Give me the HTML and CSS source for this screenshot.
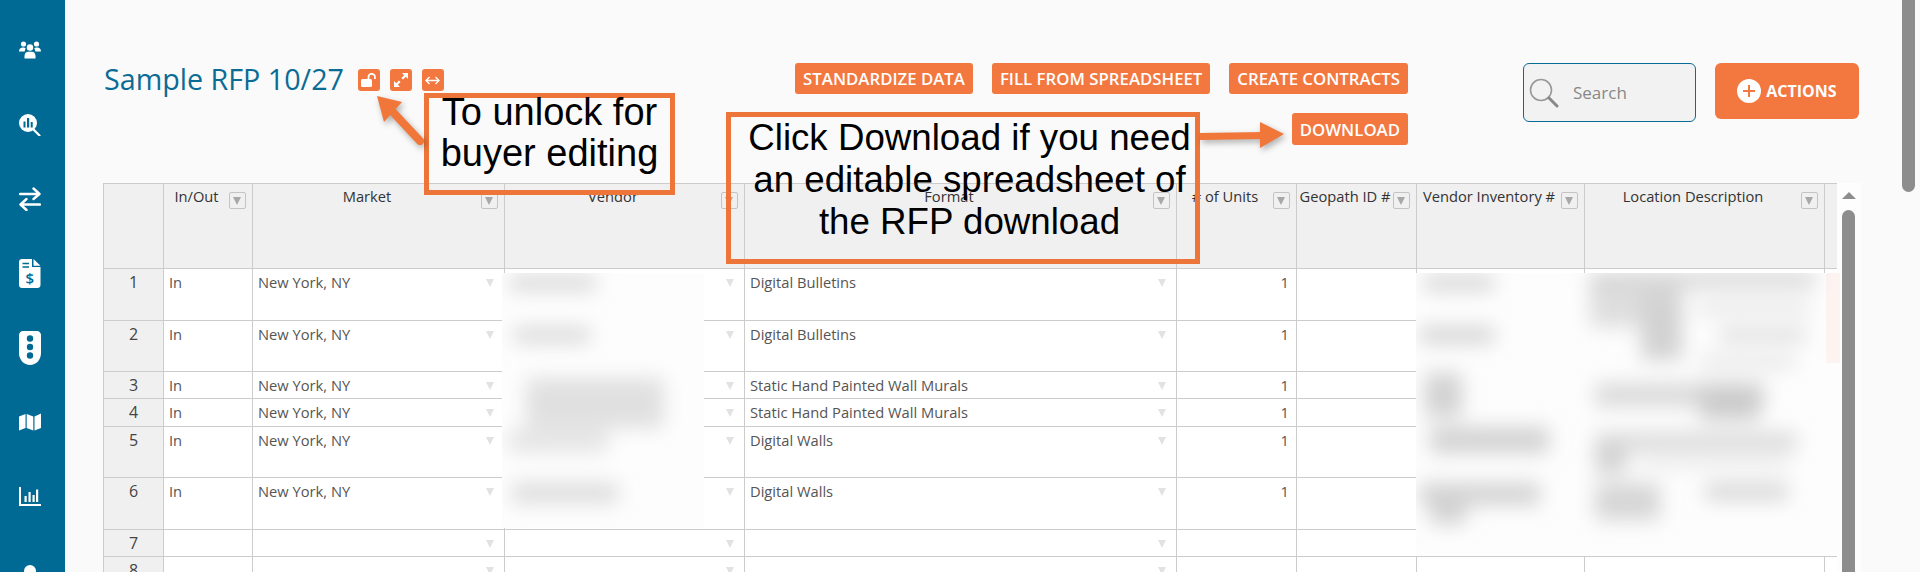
FILE: index.html
```html
<!DOCTYPE html>
<html lang="en">
<head>
    <meta charset="UTF-8">
    <meta name="viewport" content="width=device-width, initial-scale=1.0">
    <title>Sample RFP 10/27</title>
    <link rel="stylesheet" href="styles.css">
</head>
<body>
    <nav class="sidebar">
        <a class="nav-item">
            <svg width="22" height="18" viewBox="0 0 22 18" fill="#fff">
                <circle cx="4.5" cy="3" r="2.6"/><circle cx="17.5" cy="3" r="2.6"/><circle cx="11" cy="6.5" r="3.2"/>
                <path d="M0 10.5C0 8 1.5 6.6 4 6.6c1.2 0 2 .3 2.7 1-.7 1-1 2-1 3H0z"/>
                <path d="M22 10.5c0-2.500-1.500-3.900-4-3.900-1.200 0-2 .3-2.700 1 .7 1 1 2 1 3H22z"/>
                <path d="M5.500 17.500v-2.500c0-2.800 1.800-4.300 3.500-4.300h4c1.700 0 3.500 1.500 3.500 4.300v2.500z"/>
            </svg>
        </a>
        <a class="nav-item">
            <svg width="22" height="22" viewBox="0 0 22 22" fill="#fff">
                <circle cx="9" cy="9" r="9"/>
                <path d="M14.500 15.500l6 6" stroke="#fff" stroke-width="2.200" stroke-linecap="round"/>
                <path d="M4.500 7.500h2v6h-2zM8 4h2.200v9.500H8zM11.700 8h2v5.500h-2z" fill="#006a94"/>
            </svg>
        </a>
        <a class="nav-item">
            <svg width="22" height="24" viewBox="0 0 22 24" fill="none" stroke="#fff" stroke-width="2.400" stroke-linecap="round" stroke-linejoin="round">
                <path d="M1 7h19M14.500 1.500L20.500 7l-6 5"/>
                <path d="M21 17.500H2M7.500 12L1.500 17.500l6 5.500"/>
            </svg>
        </a>
        <a class="nav-item">
            <svg width="22" height="29" viewBox="0 0 22 29" fill="#fff">
                <path d="M3 0h10v8h8.500v18c0 1.700-1.300 3-3 3H3c-1.700 0-3-1.300-3-3V3c0-1.700 1.300-3 3-3z"/>
                <path d="M14.500 0l7 6.800h-7z"/>
                <path d="M3.500 4.500h6.500M3.500 8h6.500" stroke="#006a94" stroke-width="1.500"/>
                <text class="doc-dollar" x="10.800" y="24.500">$</text>
            </svg>
        </a>
        <a class="nav-item">
            <svg width="22" height="34" viewBox="0 0 22 34" fill="#fff">
                <path d="M4 0h14c2.200 0 4 1.800 4 4v18c0 7-5 12-11 12S0 29 0 22V4c0-2.200 1.800-4 4-4z"/>
                <circle cx="11" cy="7.500" r="3.200" fill="#006a94"/>
                <circle cx="11" cy="16" r="3.200" fill="#006a94"/>
                <circle cx="11" cy="24.500" r="3.200" fill="#006a94"/>
            </svg>
        </a>
        <a class="nav-item">
            <svg width="22" height="18" viewBox="0 0 22 18" fill="#fff">
                <path d="M0 3.500L6.500 1v14L0 17.500zM7.700 1l6.600 2.500v14L7.700 15zM15.500 3.500L22 .5V15l-6.500 2.500z"/>
            </svg>
        </a>
        <a class="nav-item">
            <svg width="22" height="20" viewBox="0 0 22 20" fill="#fff">
                <path d="M1 0v18h20.500" fill="none" stroke="#fff" stroke-width="2" stroke-linecap="round"/>
                <path d="M5.500 9h2.200v6H5.500zM9.500 5h2.200v10H9.500zM13.500 8h2.200v7h-2.200zM17 2.500h2.200V15H17z"/>
            </svg>
        </a>
        <a class="nav-item"><span class="nav-dot"></span></a>
    </nav>

    <main class="content">
        <header class="top-bar">
            <div class="title-group">
                <h1>Sample RFP 10/27</h1>
                <button class="icon-btn">
                    <svg width="16" height="14" viewBox="0 0 16 14" fill="#fff">
                        <rect x="0" y="6" width="11" height="8" rx="1.500"/>
                        <path d="M7.500 6.500V4a3.200 3.200 0 0 1 6.400 0v2" fill="none" stroke="#fff" stroke-width="1.800"/>
                    </svg>
                </button>
                <button class="icon-btn">
                    <svg width="14" height="14" viewBox="0 0 14 14" fill="#fff">
                        <path d="M8 0h6v6l-2.200-2.200-2.800 2.800-1.600-1.600 2.800-2.800zM6 14H0V8l2.200 2.200 2.800-2.800 1.600 1.600-2.800 2.800z"/>
                    </svg>
                </button>
                <button class="icon-btn">
                    <svg width="15" height="9" viewBox="0 0 15 9" fill="none" stroke="#fff" stroke-width="1.400">
                        <path d="M1.500 4.500h12M4.500 1L1 4.500 4.500 8M10.500 1L14 4.500 10.500 8"/>
                    </svg>
                </button>
            </div>

            <div class="tool-buttons">
                <div class="tool-row">
                    <button class="tool-btn">STANDARDIZE DATA</button>
                    <button class="tool-btn">FILL FROM SPREADSHEET</button>
                    <button class="tool-btn">CREATE CONTRACTS</button>
                </div>
                <div class="tool-row">
                    <button class="tool-btn tool-btn-tall">DOWNLOAD</button>
                </div>
            </div>

            <div class="search-box">
                <svg width="30" height="30" viewBox="0 0 30 30" fill="none">
                    <circle cx="12" cy="12" r="10.500" stroke="#999" stroke-width="1.600"/>
                    <path d="M20 20l8 8" stroke="#888" stroke-width="3" stroke-linecap="round"/>
                </svg>
                <span>Search</span>
            </div>

            <button class="actions-btn">
                <span class="plus-circle"></span>
                ACTIONS
            </button>
        </header>

        <div class="grid-wrap">
            <table class="rfp-table">
                <colgroup>
                    <col class="col-num"><col class="col-inout"><col class="col-market"><col class="col-vendor">
                    <col class="col-format"><col class="col-units"><col class="col-geo"><col class="col-inv">
                    <col class="col-loc"><col class="col-end">
                </colgroup>
                <thead>
                    <tr>
                        <th></th>
                        <th><div class="head"><span>In/Out</span><i class="filter"></i></div></th>
                        <th><div class="head"><span>Market</span><i class="filter"></i></div></th>
                        <th><div class="head"><span>Vendor</span><i class="filter"></i></div></th>
                        <th><div class="head"><span>Format</span><i class="filter"></i></div></th>
                        <th><div class="head"><span># of Units</span><i class="filter"></i></div></th>
                        <th><div class="head"><span>Geopath ID #</span><i class="filter"></i></div></th>
                        <th><div class="head"><span>Vendor Inventory #</span><i class="filter"></i></div></th>
                        <th><div class="head"><span>Location Description</span><i class="filter"></i></div></th>
                        <th></th>
                    </tr>
                </thead>
                <tbody>
                    <tr class="row-52">
                        <td class="num">1</td><td>In</td><td class="drop">New York, NY</td><td class="drop"></td>
                        <td class="drop">Digital Bulletins</td><td class="qty">1</td><td></td><td></td><td></td><td></td>
                    </tr>
                    <tr class="row-51">
                        <td class="num">2</td><td>In</td><td class="drop">New York, NY</td><td class="drop"></td>
                        <td class="drop">Digital Bulletins</td><td class="qty">1</td><td></td><td></td><td></td><td></td>
                    </tr>
                    <tr class="row-27">
                        <td class="num">3</td><td>In</td><td class="drop">New York, NY</td><td class="drop"></td>
                        <td class="drop">Static Hand Painted Wall Murals</td><td class="qty">1</td><td></td><td></td><td></td><td></td>
                    </tr>
                    <tr class="row-28">
                        <td class="num">4</td><td>In</td><td class="drop">New York, NY</td><td class="drop"></td>
                        <td class="drop">Static Hand Painted Wall Murals</td><td class="qty">1</td><td></td><td></td><td></td><td></td>
                    </tr>
                    <tr class="row-51">
                        <td class="num">5</td><td>In</td><td class="drop">New York, NY</td><td class="drop"></td>
                        <td class="drop">Digital Walls</td><td class="qty">1</td><td></td><td></td><td></td><td></td>
                    </tr>
                    <tr class="row-52">
                        <td class="num">6</td><td>In</td><td class="drop">New York, NY</td><td class="drop"></td>
                        <td class="drop">Digital Walls</td><td class="qty">1</td><td></td><td></td><td></td><td></td>
                    </tr>
                    <tr class="row-27">
                        <td class="num">7</td><td></td><td class="drop"></td><td class="drop"></td>
                        <td class="drop"></td><td></td><td></td><td></td><td></td><td></td>
                    </tr>
                    <tr class="row-27">
                        <td class="num">8</td><td></td><td class="drop"></td><td class="drop"></td>
                        <td class="drop"></td><td></td><td></td><td></td><td></td><td></td>
                    </tr>
                </tbody>
            </table>

            <div class="grid-scroll">
                <span class="scroll-up"></span>
                <span class="scroll-thumb"></span>
            </div>
        </div>
    </main>

    <div class="page-scroll"></div>

    <!-- blurred-out cells -->
    <svg class="blur-patch blur-vendor" width="202" height="255" viewBox="502 273 202 255">
        <defs><filter id="soft" x="-30%" y="-50%" width="160%" height="200%"><feGaussianBlur stdDeviation="10"/></filter></defs>
        <rect x="502" y="273" width="202" height="255" fill="#fdfdfd"/>
        <g filter="url(#soft)" fill="#d4d4d4">
            <rect x="510" y="276" width="86" height="14"/>
            <rect x="514" y="328" width="76" height="14"/>
            <rect x="526" y="378" width="138" height="50" fill="#e0e0e0"/>
            <rect x="508" y="430" width="100" height="22" fill="#e4e4e4"/>
            <rect x="512" y="483" width="106" height="20" fill="#dcdcdc"/>
        </g>
    </svg>
    <svg class="blur-patch blur-right" width="424" height="283" viewBox="1416 273 424 283">
        <rect x="1416" y="273" width="424" height="283" fill="#fdfdfd"/>
        <rect x="1826" y="273" width="14" height="90" fill="#fdf3f1"/>
        <g filter="url(#soft)" fill="#d2d2d2">
            <rect x="1424" y="276" width="70" height="14"/>
            <rect x="1420" y="327" width="74" height="16"/>
            <rect x="1425" y="373" width="37" height="44"/>
            <rect x="1430" y="427" width="119" height="26"/>
            <rect x="1420" y="483" width="120" height="22"/>
            <rect x="1430" y="500" width="36" height="24"/>
            <rect x="1590" y="273" width="225" height="14"/>
            <rect x="1590" y="287" width="92" height="40" fill="#dedede"/>
            <rect x="1641" y="293" width="41" height="67"/>
            <rect x="1696" y="303" width="114" height="10" fill="#e0e0e0"/>
            <rect x="1719" y="330" width="87" height="10"/>
            <rect x="1700" y="357" width="96" height="10" fill="#e0e0e0"/>
            <rect x="1595" y="383" width="170" height="24" fill="#dadada"/>
            <rect x="1700" y="383" width="60" height="37" fill="#cccccc"/>
            <rect x="1595" y="433" width="202" height="17" fill="#d8d8d8"/>
            <rect x="1595" y="447" width="32" height="26"/>
            <rect x="1640" y="458" width="150" height="8" fill="#e2e2e2"/>
            <rect x="1595" y="483" width="65" height="37" fill="#d6d6d6"/>
            <rect x="1705" y="483" width="83" height="17" fill="#d6d6d6"/>
        </g>
    </svg>

    <!-- annotations drawn over the screenshot -->
    <div class="callout callout-unlock"><span>To unlock for<br>buyer editing</span></div>
    <div class="callout callout-download"><span>Click Download if you need<br>an editable spreadsheet of<br>the RFP download</span></div>
    <svg class="arrow arrow-unlock" width="60" height="60" viewBox="370 90 60 60">
        <path d="M420 141L391 110" stroke="#f0763a" stroke-width="8" stroke-linecap="round" fill="none"/>
        <path d="M377 96L402 102 384 122z" fill="#f0763a"/>
    </svg>
    <svg class="arrow arrow-download" width="100" height="40" viewBox="1195 115 100 40">
        <path d="M1200 136.500L1264 135.500" stroke="#f0763a" stroke-width="7" fill="none"/>
        <path d="M1284 134L1260 122V148z" fill="#f0763a"/>
    </svg>
</body>
</html>
```

FILE: styles.css
```css
html, body {
    height: 572px;
    overflow: hidden;
}

body {
    display: flex;
    margin: 0;
    background-color: #fafafa;
    font-family: "Open Sans", Arial, sans-serif;
    color: #444;
}

.sidebar {
    flex: 0 0 65px;
    height: 572px;
    padding-top: 13px;
    box-sizing: border-box;
    overflow: hidden;
    background-color: #006a94;
}

.nav-item {
    display: flex;
    align-items: center;
    justify-content: center;
    width: 59px;
    height: 74.4px;
}

.doc-dollar {
    font-family: "Open Sans", Arial, sans-serif;
    font-size: 15px;
    font-weight: 600;
    text-anchor: middle;
    fill: #006a94;
}

.nav-dot {
    width: 12px;
    height: 12px;
    border-radius: 50%;
    background-color: #fff;
}

.content {
    flex: 1;
    height: 572px;
    box-sizing: border-box;
    overflow: hidden;
    padding: 63px 61px 0 38px;
    min-width: 0;
}

.top-bar {
    display: flex;
    align-items: flex-start;
    height: 120px;
}

.title-group {
    display: flex;
    align-items: flex-start;
    gap: 10px;
    margin-top: 6px;
    flex: 1;
}

.title-group h1 {
    margin: -9px 4px 0 1px;
    font-size: 28.7px;
    font-weight: 400;
    line-height: 38px;
    color: #0a6c94;
}

.icon-btn {
    display: flex;
    align-items: center;
    justify-content: center;
    width: 22px;
    height: 22px;
    padding: 0;
    border: 0;
    border-radius: 3px;
    background-color: #f2783f;
}

.tool-buttons {
    display: flex;
    flex-direction: column;
    align-items: flex-end;
    gap: 19px;
    margin-right: 115px;
}

.tool-row {
    display: flex;
    gap: 19px;
}

.tool-btn {
    height: 31px;
    padding: 0 8px;
    border: 0;
    border-radius: 3px;
    background-color: #f2783f;
    color: #fff;
    font-family: "Open Sans", Arial, sans-serif;
    font-size: 16.8px;
    font-weight: 600;
    white-space: nowrap;
}

.tool-btn-tall {
    height: 32px;
}

.search-box {
    display: flex;
    align-items: center;
    gap: 14px;
    width: 173px;
    height: 59px;
    padding: 0 0 0 5px;
    box-sizing: border-box;
    border: 1px solid #0a6c94;
    border-radius: 6px;
    background-color: #f2f2f2;
    color: #888;
    font-size: 17px;
}

.actions-btn {
    display: flex;
    align-items: center;
    justify-content: center;
    gap: 5px;
    width: 144px;
    height: 56px;
    margin-left: 19px;
    padding: 0;
    border: 0;
    border-radius: 6px;
    background-color: #f2783f;
    color: #fff;
    font-family: "Open Sans", Arial, sans-serif;
    font-size: 16px;
    font-weight: 700;
}

.plus-circle {
    position: relative;
    width: 24px;
    height: 24px;
    border-radius: 50%;
    background-color: #fff;
}

.plus-circle::before,
.plus-circle::after {
    content: "";
    position: absolute;
    background-color: #f2783f;
}

.plus-circle::before {
    left: 6px;
    top: 11px;
    width: 12px;
    height: 2px;
}

.plus-circle::after {
    left: 11px;
    top: 6px;
    width: 2px;
    height: 12px;
}

.grid-wrap {
    display: flex;
    align-items: flex-start;
}

.rfp-table {
    flex: 0 0 1733px;
    width: 1733px;
    table-layout: fixed;
    border-collapse: collapse;
    font-size: 14.7px;
    background-color: #fff;
}

.col-num { width: 60px; }
.col-inout { width: 89px; }
.col-market { width: 252px; }
.col-vendor { width: 240px; }
.col-format { width: 432px; }
.col-units { width: 120px; }
.col-geo { width: 120px; }
.col-inv { width: 168px; }
.col-loc { width: 240px; }
.col-end { width: 12px; }

.rfp-table th,
.rfp-table td {
    border: 1px solid #ccc;
    padding: 0;
    vertical-align: top;
}

.rfp-table th {
    height: 85px;
    box-sizing: border-box;
    background-color: #f0f0f0;
    font-weight: 400;
    color: #333;
}

.rfp-table th:last-child,
.rfp-table td:last-child {
    border-right: 0;
}

.head {
    display: flex;
    align-items: flex-start;
    padding: 2px 6px 0 0;
    line-height: 20px;
}

.head span {
    flex: 1;
    text-align: center;
    white-space: nowrap;
}

.filter {
    position: relative;
    flex: 0 0 17px;
    height: 17px;
    margin-top: 6px;
    box-sizing: border-box;
    border: 1px solid #c4c4c4;
    border-radius: 2px;
}

.filter::after {
    content: "";
    position: absolute;
    left: 3px;
    top: 4px;
    border-left: 4px solid transparent;
    border-right: 4px solid transparent;
    border-top: 8px solid #a8a8a8;
}

.rfp-table td {
    box-sizing: border-box;
    padding: 3px 6px 0 5px;
    line-height: 20px;
    color: #555;
}

.row-52 td { height: 52px; }
.row-51 td { height: 51px; }
.row-27 td { height: 27px; }
.row-28 td { height: 28px; }

.rfp-table td.num {
    padding: 3px 0 0;
    background-color: #f0f0f0;
    text-align: center;
    font-size: 16px;
    color: #444;
}

.rfp-table td.qty {
    padding-right: 7px;
    text-align: right;
}

.drop::after {
    content: "";
    float: right;
    margin: 7px 4px 0 0;
    border-left: 4px solid transparent;
    border-right: 4px solid transparent;
    border-top: 8px solid #e2e2e2;
}

.grid-scroll {
    display: flex;
    flex-direction: column;
    align-items: center;
    gap: 11px;
    flex: 0 0 24px;
    height: 389px;
    box-sizing: border-box;
    padding-top: 9px;
    background-color: #fdfdfd;
}

.scroll-up {
    flex: none;
    border-left: 7px solid transparent;
    border-right: 7px solid transparent;
    border-bottom: 7px solid #8d8d8d;
}

.scroll-thumb {
    flex: none;
    width: 13px;
    height: 362px;
    border-radius: 7px 7px 0 0;
    background-color: #8d8d8d;
}

.page-scroll {
    position: absolute;
    right: 5px;
    top: 0;
    width: 13px;
    height: 192px;
    border-radius: 0 0 7px 7px;
    background-color: #8d8d8d;
}

.blur-patch {
    position: absolute;
}

.blur-vendor {
    left: 502px;
    top: 273px;
}

.blur-right {
    left: 1416px;
    top: 273px;
}

.callout {
    position: absolute;
    box-sizing: border-box;
    border: 5px solid #ee7539;
    font-family: "Liberation Sans", Arial, sans-serif;
    color: #000;
    text-align: center;
}

.callout span {
    display: block;
    white-space: nowrap;
}

.callout-unlock {
    left: 424px;
    top: 93px;
    width: 251px;
    height: 102px;
    font-size: 38px;
    line-height: 41px;
}

.callout-unlock span {
    margin-top: -6px;
}

.callout-download {
    left: 726px;
    top: 112px;
    width: 474px;
    height: 152px;
    padding-left: 13px;
    font-size: 36.7px;
    line-height: 42px;
}

.arrow {
    position: absolute;
    filter: drop-shadow(2px 3px 3px rgba(0, 0, 0, 0.3));
}

.arrow-unlock {
    left: 370px;
    top: 90px;
}

.arrow-download {
    left: 1195px;
    top: 115px;
}
```
